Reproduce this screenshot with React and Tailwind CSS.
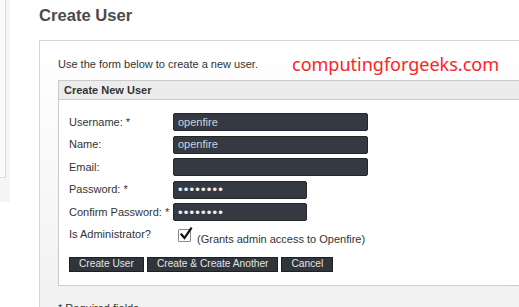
import React from "react";

const font = { fontFamily: '"Liberation Sans", Arial, sans-serif' };

function Input({ value, width, password }) {
  return (
    <div
      className={`h-[18px] ${width} rounded-[2px] border border-[#23272c] bg-[#353a42] flex items-center pl-[4px] overflow-hidden`}
    >
      {password ? (
        <span className="text-[13px] leading-none tracking-[1.2px] text-[#eeeeee]">••••••••</span>
      ) : (
        <span className="text-[11px] leading-none text-[#cfd2d6]">{value}</span>
      )}
    </div>
  );
}

function Row({ label, children }) {
  return (
    <div className="h-[22.5px] flex items-center">
      <div className="w-[104px] text-[11px] text-[#333] leading-[13px]">{label}</div>
      {children}
    </div>
  );
}

function Btn({ children }) {
  return (
    <button className="h-[15px] px-[9px] bg-[#30353c] border border-[#1d2125] text-[10.2px] leading-none text-[#e2e4e6] rounded-none">
      {children}
    </button>
  );
}

export default function App() {
  return (
    <div className="relative w-[519px] h-[307px] overflow-hidden bg-white flex" style={font}>
      {/* left sidebar */}
      <div className="w-[10px] h-[202px] bg-[#f5f5f5] shrink-0">
        <div className="w-[6px] h-[178px] bg-[#fafafa] border-r border-b border-[#dcdcdc]" />
      </div>

      {/* main */}
      <div className="ml-[29px] flex-1 flex flex-col">
        <div className="mt-[6px] h-[20px] leading-[20px] text-[16.6px] font-bold text-[#4a4a4a]">
          Create User
        </div>
        <div className="mt-[14px] flex-1 w-[520px] border-l border-t border-[#d6d6d6] bg-gradient-to-b from-white to-[#f1f1f1] pl-[18px] pt-[16px]">
          <div className="h-[14px] leading-[14px] text-[11px] text-[#333]">
            Use the form below to create a new user.
          </div>
          <div className="mt-[9px] w-[520px] border border-[#cbcbcb] bg-white">
            <div className="h-[19px] bg-[#ececec] border-b border-[#cbcbcb] flex items-center pl-[5px] text-[11px] font-bold text-[#333]">
              Create New User
            </div>
            <div className="pl-[10px] pt-[11px] pb-[13px]">
              <Row label="Username: *">
                <Input value="openfire" width="w-[195px]" />
              </Row>
              <Row label="Name:">
                <Input value="openfire" width="w-[195px]" />
              </Row>
              <Row label="Email:">
                <Input value="" width="w-[195px]" />
              </Row>
              <Row label="Password: *">
                <Input password width="w-[134px]" />
              </Row>
              <Row label="Confirm Password: *">
                <Input password width="w-[134px]" />
              </Row>
              <div className="h-[24px] flex items-start">
                <div className="w-[104px] mt-[4px] text-[11px] leading-[13px] text-[#333]">
                  Is Administrator?
                </div>
                <div className="ml-[5px] mt-[5px] relative w-[13px] h-[13px] border border-[#8a8a8a] bg-white rounded-[1px]">
                  <svg
                    className="absolute left-[0px] top-[-3px]"
                    width="14"
                    height="14"
                    viewBox="0 0 14 14"
                  >
                    <path
                      d="M2.5 7.5 L5.5 11 L12 1.5"
                      fill="none"
                      stroke="#111"
                      strokeWidth="2.2"
                      strokeLinecap="square"
                    />
                  </svg>
                </div>
                <div className="ml-[6px] mt-[9px] text-[11px] leading-[13px] text-[#333]">
                  (Grants admin access to Openfire)
                </div>
              </div>
              <div className="mt-[9px] flex gap-[3px]">
                <Btn>Create User</Btn>
                <Btn>Create &amp; Create Another</Btn>
                <Btn>Cancel</Btn>
              </div>
            </div>
          </div>
          <div className="mt-[14px] text-[11px] text-[#333]">* Required fields</div>
        </div>
      </div>

      {/* watermark */}
      <div
        className="absolute left-[292px] top-[52px] text-[18px] leading-[24px] text-[#ff1f1f]"
        style={{ fontFamily: '"Noto Sans", sans-serif' }}
      >
        computingforgeeks.com
      </div>
    </div>
  );
}
